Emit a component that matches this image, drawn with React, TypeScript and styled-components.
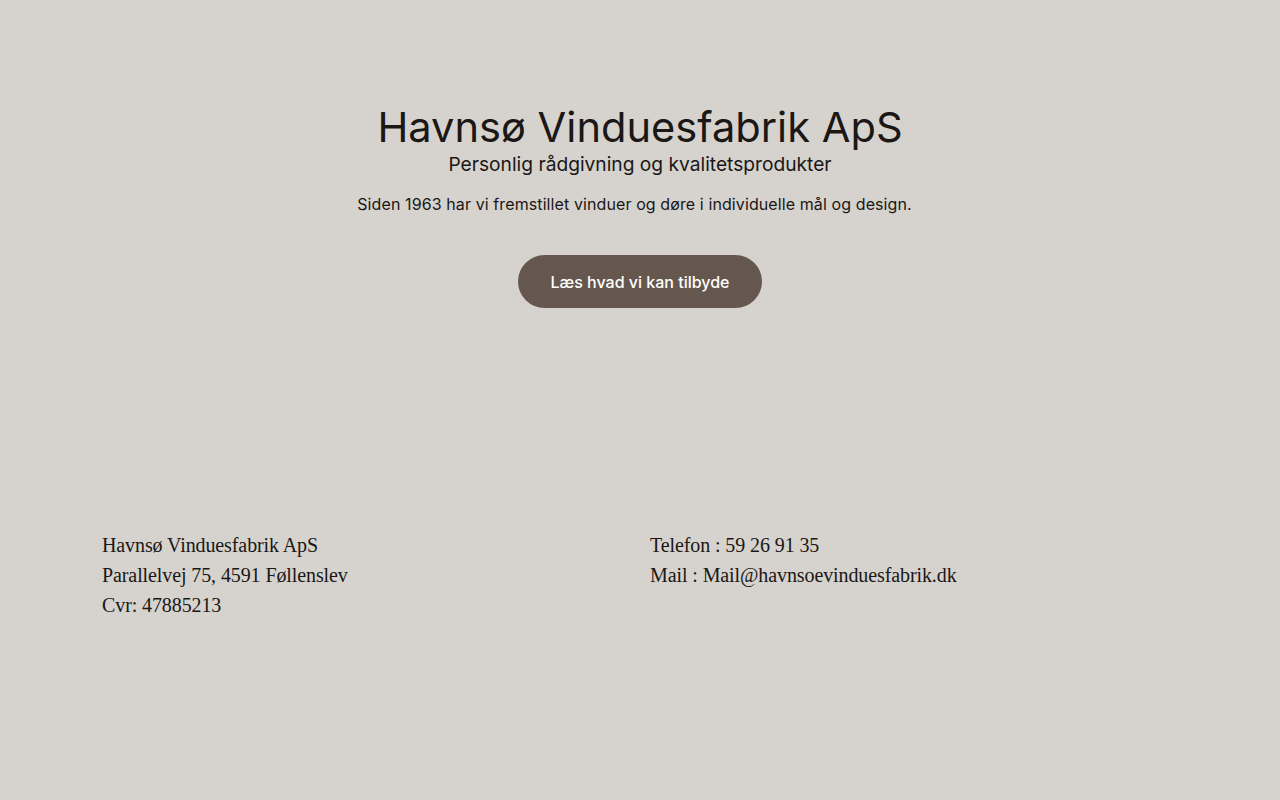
import React from 'react';
import styled, {createGlobalStyle} from 'styled-components';

const GlobalStyle = createGlobalStyle`
  html, body {
    margin: 0;
    padding: 0;
    background: #d6d3ce;
  }
  body {
    font-family: Inter, 'Noto Sans', sans-serif;
    color: #1a1715;
  }
`;

export default function App() {
  return (
    <>
      <GlobalStyle />
      <Styled.Page>
        <Styled.Hero>
          <Styled.Title>Havnsø Vinduesfabrik ApS</Styled.Title>
          <Styled.Subtitle>Personlig rådgivning og kvalitetsprodukter</Styled.Subtitle>
          <Styled.Lead>Siden 1963 har vi fremstillet vinduer og døre i individuelle mål og design.</Styled.Lead>
          <Styled.Button>Læs hvad vi kan tilbyde</Styled.Button>
        </Styled.Hero>
        <Styled.Footer>
          <Styled.Column>
            <Styled.Line>Havnsø Vinduesfabrik ApS</Styled.Line>
            <Styled.Line>Parallelvej 75, 4591 Føllenslev</Styled.Line>
            <Styled.Line>Cvr: 47885213</Styled.Line>
          </Styled.Column>
          <Styled.Column>
            <Styled.Line>Telefon : 59 26 91 35</Styled.Line>
            <Styled.Line>Mail : Mail@havnsoevinduesfabrik.dk</Styled.Line>
          </Styled.Column>
        </Styled.Footer>
      </Styled.Page>
    </>
  );
}

const Styled = {
  Page: styled.div`
    min-height: 800px;
    display: flex;
    flex-direction: column;
  `,
  Hero: styled.section`
    display: flex;
    flex-direction: column;
    align-items: center;
    padding-top: 102px;
    height: 430px;
    box-sizing: border-box;
  `,
  Title: styled.h1`
    margin: 0;
    font-size: 41.6px;
    font-weight: 400;
    line-height: 50px;
  `,
  Subtitle: styled.h2`
    margin: 0;
    font-size: 19.2px;
    font-weight: 400;
    line-height: 24px;
  `,
  Lead: styled.p`
    margin: 16px 0 0;
    padding-right: 11px;
    font-size: 16px;
    line-height: 24px;
    letter-spacing: 0.1px;
  `,
  Button: styled.button`
    margin-top: 39px;
    width: 244px;
    height: 53px;
    border: none;
    border-radius: 27px;
    background: #66574e;
    color: #ffffff;
    font-family: Inter, sans-serif;
    font-size: 16px;
    font-weight: 500;
    cursor: pointer;
  `,
  Footer: styled.footer`
    display: grid;
    grid-template-columns: 1fr 1fr;
    column-gap: 20px;
    padding: 100px 102px 0;
  `,
  Column: styled.div`
    display: flex;
    flex-direction: column;
  `,
  Line: styled.div`
    font-family: 'Liberation Serif', 'DejaVu Serif', serif;
    font-size: 20px;
    line-height: 30px;
    letter-spacing: -0.1px;
  `,
};
